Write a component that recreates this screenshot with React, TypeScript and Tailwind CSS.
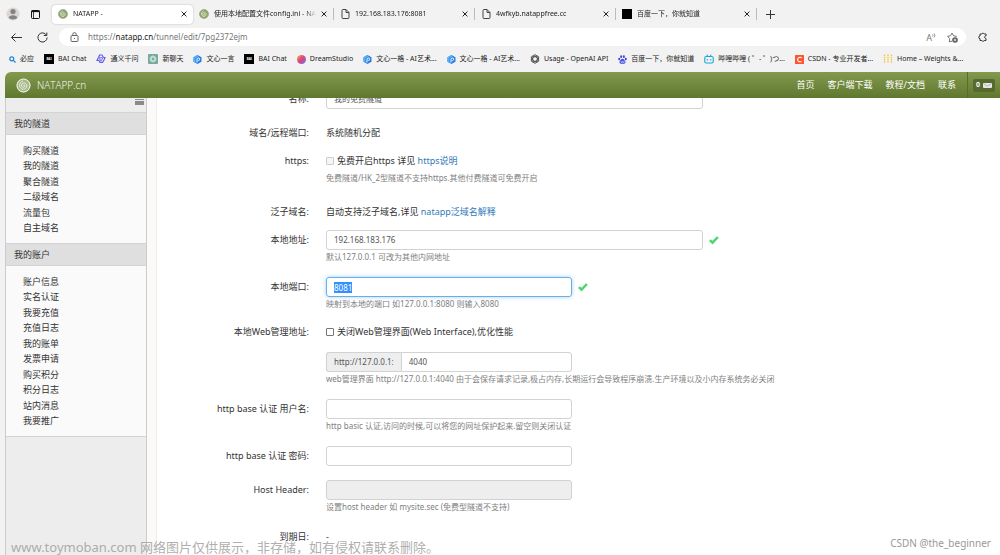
import { useEffect, useRef } from 'react';
import type { ReactNode } from 'react';
import clsx from 'clsx';

function Swirl({ size, light = false }: { size: number; light?: boolean }) {
  const ring = light ? '#e9efdc' : '#f3f6ea';
  return (
    <svg width={size} height={size} viewBox="0 0 20 20" fill="none">
      <circle cx="10" cy="10" r="9.5" fill={light ? '#a9b98a' : '#8ba06a'} />
      <circle cx="10" cy="10" r="8.6" stroke={light ? '#f4f7ec' : '#a2b386'} strokeWidth="1.2" />
      <path
        d="M10 10c.6-1.2 2.2-.6 2 .9-.3 2-3.400 2.300-4.300.300C6.600 8.700 8.600 6.300 11 6.600c3 .4 4.200 3.600 2.900 6-1.700 3-6 3.100-8 .4-2.200-3.200-.8-7.600 2.700-8.900"
        stroke={ring}
        strokeWidth="1.300"
        strokeLinecap="round"
      />
    </svg>
  );
}

function FileIcon() {
  return (
    <svg width="9" height="10" viewBox="0 0 9 10" fill="none" stroke="#444" strokeWidth="1">
      <path d="M1 1.500a1 1 0 0 1 1-1h3l3 3v5a1 1 0 0 1-1 1H2a1 1 0 0 1-1-1z" />
      <path d="M5 .5v3h3" />
    </svg>
  );
}

function CloseIcon() {
  return (
    <svg width="6" height="6" viewBox="0 0 6 6" stroke="#222" strokeWidth="1">
      <path d="M.6.6l4.800 4.800M5.400.6L.6 5.400" />
    </svg>
  );
}

function BlackIcon({ label }: { label?: string }) {
  return (
    <span className="flex size-[10px] items-center justify-center bg-black text-[3px] font-bold text-white">
      {label}
    </span>
  );
}

function WenxinIcon() {
  return (
    <svg width="9" height="9" viewBox="0 0 18 18" fill="none">
      <path d="M9 0l8 4.500v9L9 18l-8-4.500v-9z" fill="#2b7de6" />
      <path d="M9 0L1 4.500v9L5 15.700V6.500L11 3z" fill="#4fb2f7" />
      <path d="M8 15V8.500a2.600 2.600 0 1 1 2.600 2.600" stroke="#fff" strokeWidth="2" />
    </svg>
  );
}

function CheckMark() {
  return (
    <svg width="10" height="9" viewBox="0 0 10 9" fill="#4fd672">
      <path d="M0 4.900l1.700-1.700 1.800 1.600L8 .3l1.800 1.500-6.200 6.700z" />
    </svg>
  );
}

const tabs: { title: string; icon: ReactNode; active?: boolean }[] = [
  { title: 'NATAPP -', icon: <Swirl size={10} />, active: true },
  { title: '使用本地配置文件config.ini - NA', icon: <Swirl size={10} /> },
  { title: '192.168.183.176:8081', icon: <FileIcon /> },
  { title: '4wfkyb.natappfree.cc', icon: <FileIcon /> },
  { title: '百度一下，你就知道', icon: <BlackIcon /> },
];

const bookmarks: { title: string; icon: ReactNode }[] = [
  {
    title: '必应',
    icon: (
      <svg width="7" height="7" viewBox="0 0 7 7" fill="none" stroke="#1a84d8" strokeWidth="1.200">
        <circle cx="2.800" cy="2.800" r="2" />
        <path d="M4.300 4.300l2.200 2.200" />
      </svg>
    ),
  },
  { title: 'BAI Chat', icon: <BlackIcon label="BAI" /> },
  {
    title: '通义千问',
    icon: (
      <svg width="10" height="10" viewBox="0 0 20 20" fill="none" stroke="#635bea" strokeWidth="2.400">
        <path d="M7 2h5l3 5h3l-2 5-3 5H8l-2-4H2l3-6z" />
        <path d="M6 7h8l-4 7z" stroke="#8a84f2" />
      </svg>
    ),
  },
  {
    title: '新聊天',
    icon: (
      <svg width="10" height="10" viewBox="0 0 20 20" fill="none" stroke="#dcebe6" strokeWidth="1.300">
        <rect width="20" height="20" rx="2" fill="#75a99c" stroke="none" />
        <ellipse cx="10" cy="10" rx="3.500" ry="6.500" />
        <ellipse cx="10" cy="10" rx="3.500" ry="6.500" transform="rotate(60 10 10)" />
        <ellipse cx="10" cy="10" rx="3.500" ry="6.500" transform="rotate(120 10 10)" />
      </svg>
    ),
  },
  { title: '文心一言', icon: <WenxinIcon /> },
  { title: 'BAI Chat', icon: <BlackIcon label="BAI" /> },
  {
    title: 'DreamStudio',
    icon: <span className="size-[9px] rounded-full bg-linear-to-br from-[#f59a2c] via-[#dc3f7e] to-[#4a63e8]" />,
  },
  { title: '文心一格 - AI艺术...', icon: <WenxinIcon /> },
  { title: '文心一格 - AI艺术...', icon: <WenxinIcon /> },
  {
    title: 'Usage - OpenAI API',
    icon: (
      <svg width="10" height="10" viewBox="0 0 20 20" fill="none" stroke="#333" strokeWidth="1.500">
        <ellipse cx="10" cy="10" rx="4.500" ry="8.500" />
        <ellipse cx="10" cy="10" rx="4.500" ry="8.500" transform="rotate(60 10 10)" />
        <ellipse cx="10" cy="10" rx="4.500" ry="8.500" transform="rotate(120 10 10)" />
      </svg>
    ),
  },
  {
    title: '百度一下，你就知道',
    icon: (
      <svg width="9" height="9" viewBox="0 0 18 18" fill="#3a44e0">
        <ellipse cx="2.500" cy="8" rx="2" ry="2.600" />
        <ellipse cx="6.300" cy="3.300" rx="2" ry="2.800" />
        <ellipse cx="11.700" cy="3.300" rx="2" ry="2.800" />
        <ellipse cx="15.500" cy="8" rx="2" ry="2.600" />
        <path d="M9 7.500c2.500 0 3.200 2.500 5 4.200 2.200 2.100 1 5.600-1.800 5.600H5.800c-2.800 0-4-3.500-1.800-5.600 1.800-1.700 2.500-4.200 5-4.200z" />
        <path d="M6 12v3h2.500v-3M10 11v4h2.500v-3" stroke="#fff" strokeWidth="1" fill="none" />
      </svg>
    ),
  },
  {
    title: '哔哩哔哩 ( ゜- ゜)つ...',
    icon: (
      <svg width="10" height="10" viewBox="0 0 20 20" fill="none" stroke="#16a7de" strokeWidth="2.200">
        <rect x="1.500" y="5" width="17" height="13" rx="3" />
        <path d="M5.500 1.500L8 5M14.500 1.500L12 5M6.500 10v3M13.500 10v3" />
      </svg>
    ),
  },
  {
    title: 'CSDN - 专业开发者...',
    icon: (
      <svg width="9" height="9" viewBox="0 0 18 18" fill="none">
        <rect width="18" height="18" rx="1" fill="#fc5531" />
        <path d="M13.500 5.500C10 3.500 5.500 5 5.200 9c-.3 4 4 5.500 7.800 3.800" stroke="#fff" strokeWidth="2.200" />
      </svg>
    ),
  },
  {
    title: 'Home – Weights &...',
    icon: (
      <svg width="10" height="10" viewBox="0 0 20 20" stroke="#f8c13a" strokeWidth="2.600" strokeDasharray="3 1.500">
        <path d="M3 1v18M10 1v18M17 1v18" />
      </svg>
    ),
  },
];

const menus = [
  {
    title: '我的隧道',
    listClass: 'min-h-[108px]',
    items: ['购买隧道', '我的隧道', '聚合隧道', '二级域名', '流量包', '自主域名'],
  },
  {
    title: '我的账户',
    listClass: 'min-h-[170px]',
    items: [
      '账户信息',
      '实名认证',
      '我要充值',
      '充值日志',
      '我的账单',
      '发票申请',
      '购买积分',
      '积分日志',
      '站内消息',
      '我要推广',
    ],
  },
];

const navLinks = ['首页', '客户端下载', '教程/文档', '联系'];

function BrowserChrome() {
  return (
    <div className="bg-[#f2f2f2] text-[7px] text-[#222]">
      <div className="flex h-7 items-center">
        <div className="flex w-[52px] shrink-0 items-center gap-[11px] pl-[6px]">
          <svg width="14" height="14" viewBox="0 0 14 14">
            <circle cx="7" cy="7" r="6.500" fill="#d9d7d5" />
            <circle cx="7" cy="4.600" r="2.600" fill="#87827e" />
            <path d="M2.800 10.800c0-3.400 8.400-3.400 8.400 0-1.800 2.200-6.600 2.200-8.400 0z" fill="#87827e" />
          </svg>
          <svg width="9" height="9" viewBox="0 0 9 9" fill="none" stroke="#111">
            <rect x=".5" y=".5" width="8" height="8" rx="1" />
            <path d="M.5 1.300h8" strokeWidth="1.600" />
            <path d="M2.500 2v6" strokeWidth=".8" />
          </svg>
        </div>
        {tabs.map((tab) => (
          <div
            key={tab.title}
            className={clsx(
              'flex w-[141px] min-w-0 items-center gap-[5px] px-[6px]',
              tab.active ? 'h-[19px] rounded-[4px] bg-white shadow-[0_0_2px_rgba(0,0,0,0.25)]' : 'h-3 border-r border-[#bbb]'
            )}
          >
            <span className="flex w-[10px] shrink-0 justify-center">{tab.icon}</span>
            <span className="flex-1 overflow-hidden whitespace-nowrap mask-r-from-90%">{tab.title}</span>
            <button aria-label="关闭标签页" className="shrink-0">
              <CloseIcon />
            </button>
          </div>
        ))}
        <button aria-label="新建标签页" className="ml-[9px]">
          <svg width="9" height="9" viewBox="0 0 9 9" stroke="#333">
            <path d="M4.500 0v9M0 4.500h9" />
          </svg>
        </button>
      </div>

      <div className="flex h-[18px] items-center">
        <button aria-label="返回" className="ml-[11px]">
          <svg width="11" height="9" viewBox="0 0 11 9" fill="none" stroke="#333">
            <path d="M4.500.5l-4 4 4 4M.5 4.500H11" />
          </svg>
        </button>
        <button aria-label="刷新" className="ml-[15px]">
          <svg width="11" height="11" viewBox="0 0 11 11" fill="none" stroke="#333">
            <path d="M9.500 3.200A4.600 4.600 0 1 0 10.100 5.500M9.800.5v3H6.800" />
          </svg>
        </button>
        <div className="ml-[11px] flex h-[18px] flex-1 items-center rounded-full bg-white pr-2 pl-[11px]">
          <svg width="9" height="10" viewBox="0 0 9 10" fill="none" stroke="#666">
            <rect x="1" y="3.500" width="7" height="6" rx="1" />
            <path d="M2.800 3.500V2.300a1.700 1.700 0 0 1 3.400 0v1.200M4.500 6v1" />
          </svg>
          <span className="ml-[9px] flex-1 text-[8px] text-[#777]">
            https://<span className="text-[#222]">natapp.cn</span>/tunnel/edit/7pg2372ejm
          </span>
          <span className="flex text-[9px] leading-none text-[#777]">
            A
            <svg width="4" height="6" viewBox="0 0 4 6" fill="none" stroke="#777" strokeWidth=".8">
              <path d="M.5 1.500q1 1 0 2M2 .5q2 2 0 4" />
            </svg>
          </span>
          <svg className="ml-[11px]" width="11" height="11" viewBox="0 0 11 11" fill="none" stroke="#777">
            <path d="M5 9L2.300 10l.4-3.200L.6 4.300l3-.6L5 1l1.400 2.700 3 .6-.7.9" />
            <circle cx="8" cy="8" r="2.800" fill="#555" stroke="none" />
            <path d="M8 6.500v3M6.500 8h3" stroke="#fff" strokeWidth=".8" />
          </svg>
        </div>
        <svg className="mr-3 ml-3" width="10" height="10" viewBox="0 0 10 10" fill="none" stroke="#333">
          <path d="M2 2h1.800a1.300 1.300 0 0 1 2.400 0H8v2c-2 0-2 2.400 0 2.400V8.500H6.200a1.300 1.300 0 0 1-2.400 0H2V6.600A1.300 1.300 0 0 1 2 4z" />
        </svg>
      </div>

      <div className="flex h-[26px] items-center gap-[10px] overflow-hidden pl-[9px] whitespace-nowrap">
        {bookmarks.map((mark, i) => (
          <a key={i} href="#" className="flex shrink-0 items-center gap-1">
            {mark.icon}
            {mark.title}
          </a>
        ))}
      </div>
    </div>
  );
}

function Sidebar() {
  return (
    <aside className="w-[142px] shrink-0 border-x border-[#ccc] bg-[#ededed]">
      <div className="flex h-[14px] justify-end pr-[2px]">
        <button aria-label="收起菜单" className="self-start pt-px">
          <svg width="9" height="6" viewBox="0 0 9 6" fill="#8a8a8a">
            <path d="M0 0h9v1H0zM0 2h9v4H0z" />
          </svg>
        </button>
      </div>
      {menus.map((menu) => (
        <section key={menu.title}>
          <h2 className="flex h-[23px] items-center border-y border-[#d3d3d3] bg-[#dfdfdf] pl-2">{menu.title}</h2>
          <ul className={clsx('grid content-between bg-[#fafafa] py-2 pl-[17px]', menu.listClass)}>
            {menu.items.map((item) => (
              <li key={item} className="leading-[15px]">
                <a href="#">{item}</a>
              </li>
            ))}
          </ul>
        </section>
      ))}
      <div className="border-t border-[#d3d3d3]" />
    </aside>
  );
}

const inputBase = 'h-5 rounded-[3px] border border-[#d2d2d2] px-[7px] text-[8px] text-[#555] outline-none';

function Row({
  label,
  htmlFor,
  className,
  children,
}: {
  label: string;
  htmlFor?: string;
  className?: string;
  children: ReactNode;
}) {
  return (
    <div className={clsx('flex items-start gap-[17px]', className)}>
      <label htmlFor={htmlFor} className="w-[152px] shrink-0 text-right leading-5">
        {label}
      </label>
      <div className="min-w-0 flex-1 leading-5">{children}</div>
    </div>
  );
}

function Hint({ children }: { children: ReactNode }) {
  return <p className="mt-px text-[8px] leading-3 whitespace-nowrap text-[#808080]">{children}</p>;
}

function TunnelForm() {
  const portRef = useRef<HTMLInputElement>(null);

  useEffect(() => {
    portRef.current?.focus({ preventScroll: true });
    portRef.current?.select();
  }, []);

  return (
    <form className="-mt-[9px]">
      <Row label="名称:" htmlFor="name">
        <input id="name" defaultValue="我的免费隧道" className={clsx(inputBase, 'block w-[377px]')} />
      </Row>
      <Row label="域名/远程端口:" className="mt-3.5">
        系统随机分配
      </Row>
      <Row label="https:" htmlFor="https" className="mt-2">
        <div className="flex items-center">
          <input
            id="https"
            type="checkbox"
            disabled
            className="mr-[3px] size-2 appearance-none rounded-[1px] border border-[#ccc] bg-[#f6f6f6]"
          />
          <span>
            免费开启https 详见{' '}
            <a href="#" className="text-[#337ab7]">
              https说明
            </a>
          </span>
        </div>
        <Hint>免费隧道/HK_2型隧道不支持https.其他付费隧道可免费开启</Hint>
      </Row>
      <Row label="泛子域名:" className="mt-[18px]">
        自动支持泛子域名,详见{' '}
        <a href="#" className="text-[#337ab7]">
          natapp泛域名解释
        </a>
      </Row>
      <Row label="本地地址:" htmlFor="addr" className="mt-2">
        <div className="flex items-center gap-[6px]">
          <input id="addr" defaultValue="192.168.183.176" className={clsx(inputBase, 'w-[377px]')} />
          <CheckMark />
        </div>
        <Hint>默认127.0.0.1 可改为其他内网地址</Hint>
      </Row>
      <Row label="本地端口:" htmlFor="port" className="mt-3.5">
        <div className="flex items-center gap-[6px]">
          <input
            id="port"
            ref={portRef}
            defaultValue="8081"
            className={clsx(
              inputBase,
              'w-[246px] leading-3 selection:bg-[#3390ff] selection:text-white focus:border-[#66afe9] focus:shadow-[0_0_4px_rgba(102,175,233,0.6)]'
            )}
          />
          <CheckMark />
        </div>
        <Hint>映射到本地的端口 如127.0.0.1:8080 则输入8080</Hint>
      </Row>
      <Row label="本地Web管理地址:" htmlFor="webport" className="mt-3">
        <label className="flex items-center">
          <input
            type="checkbox"
            className="mr-[3px] size-2 appearance-none rounded-[1px] border border-[#767676] bg-white"
          />
          关闭Web管理界面(Web Interface),优化性能
        </label>
        <div className="mt-[10px] flex w-[246px]">
          <span className="flex h-5 items-center rounded-l-[3px] border border-r-0 border-[#d2d2d2] bg-[#eee] px-[7px] text-[8px] text-[#555]">
            http://127.0.0.1:
          </span>
          <input
            id="webport"
            defaultValue="4040"
            className="h-5 min-w-0 flex-1 rounded-r-[3px] border border-[#d2d2d2] px-[7px] text-[8px] text-[#555] outline-none"
          />
        </div>
        <Hint>
          web管理界面 http://127.0.0.1:4040 由于会保存请求记录,极占内存,长期运行会导致程序崩溃.生产环境以及小内存系统务必关闭
        </Hint>
      </Row>
      <Row label="http base 认证 用户名:" htmlFor="user" className="mt-3.5">
        <input id="user" className={clsx(inputBase, 'block w-[246px]')} />
        <Hint>http basic 认证,访问的时候,可以将您的网址保护起来.留空则关闭认证</Hint>
      </Row>
      <Row label="http base 认证 密码:" htmlFor="pass" className="mt-3.5">
        <input id="pass" className={clsx(inputBase, 'block w-[246px]')} />
      </Row>
      <Row label="Host Header:" htmlFor="host" className="mt-3.5">
        <input id="host" disabled className={clsx(inputBase, 'block w-[246px] bg-[#eee]')} />
        <Hint>设置host header 如 mysite.sec (免费型隧道不支持)</Hint>
      </Row>
      <Row label="到期日:" className="mt-3.5">
        -
      </Row>
    </form>
  );
}

export default function App() {
  return (
    <div className="relative flex h-screen flex-col overflow-hidden bg-[#f2f2f2] font-['Noto_Sans','Noto_Sans_CJK_SC',sans-serif] text-[9px] text-[#333]">
      <BrowserChrome />
      <div className="ml-[5px] flex min-h-0 flex-1 flex-col overflow-hidden rounded-tl-[6px] bg-white">
        <header className="flex h-[26px] shrink-0 items-center bg-linear-to-b from-[#829a4d] to-[#60772f] pl-[11px] text-white">
          <Swirl size={15} light />
          <span className="ml-[6px] flex-1 font-['Open_Sans','Noto_Sans_CJK_SC',sans-serif] text-[10px] font-light">
            NATAPP.cn
          </span>
          <nav className="flex gap-[13px] pr-[11px]">
            {navLinks.map((link) => (
              <a key={link} href="#">
                {link}
              </a>
            ))}
          </nav>
          <div className="flex h-full items-center border-l border-[#586d2b] px-[5px]">
            <button className="flex h-[13px] items-center gap-[3px] rounded-[2px] bg-[#566a2f] px-[3px] text-[7px] font-bold">
              0
              <svg width="9" height="7" viewBox="0 0 9 7" fill="#e6e6e6">
                <rect y="1" width="9" height="5" rx="1" />
                <path d="M1 2l3.500 2L8 2" fill="none" stroke="#aaa" strokeWidth=".8" />
              </svg>
            </button>
          </div>
        </header>
        <div className="flex min-h-0 flex-1">
          <Sidebar />
          <div className="w-[10px] shrink-0 border-r border-[#eee] bg-[#fbfaf8]" />
          <main className="min-w-0 flex-1 overflow-hidden bg-white">
            <TunnelForm />
          </main>
        </div>
      </div>
      <div className="absolute right-[9px] bottom-0 left-[11px] flex items-end justify-between">
        <span className="text-[13px] leading-4 text-[#999]/80">
          www.toymoban.com 网络图片仅供展示，非存储，如有侵权请联系删除。
        </span>
        <span className="text-[10px] leading-[23px] text-[#999]">CSDN @the_beginner</span>
      </div>
    </div>
  );
}
